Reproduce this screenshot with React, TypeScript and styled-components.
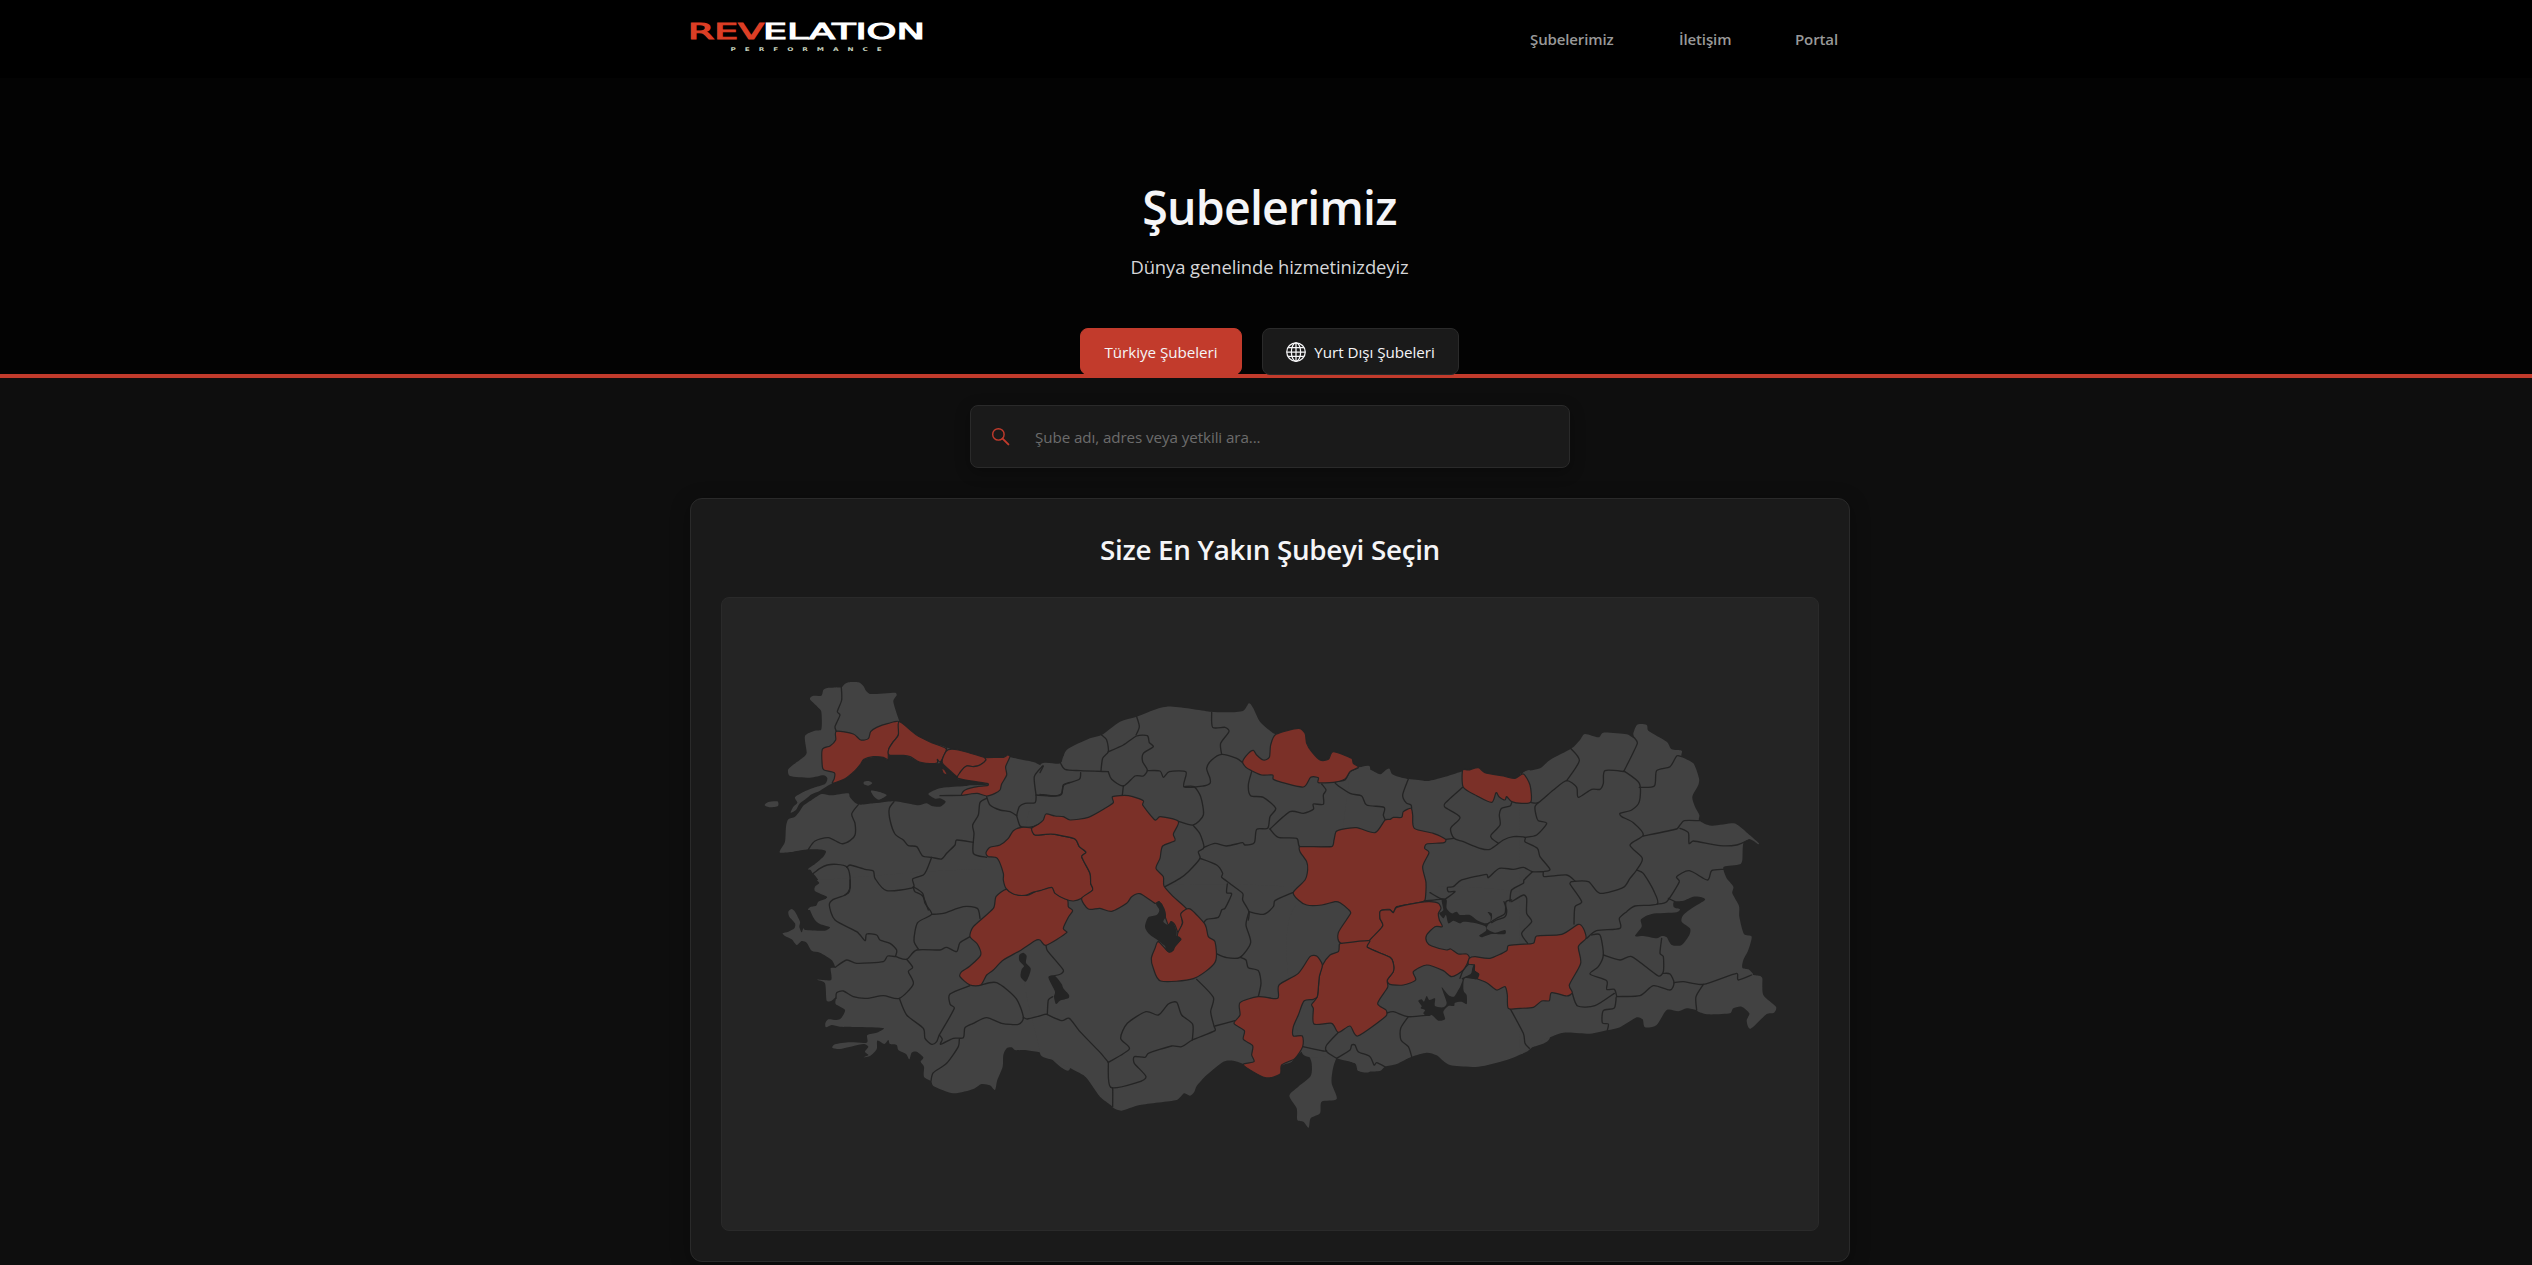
import React from "react";
import styled, { createGlobalStyle } from "styled-components";

const GlobalStyle = createGlobalStyle`
  * { box-sizing: border-box; }
  html, body { margin: 0; padding: 0; background: #0e0e0e; }
  body {
    font-family: "Open Sans", "Noto Sans", sans-serif;
    color: #f5f5f7;
    overflow: hidden;
  }
  h1, h2, p { margin: 0; }
`;

const Page = styled.div`
  width: 100%;
  height: 1265px;
  overflow: hidden;
  background: #0e0e0e;
`;

const Header = styled.header`
  height: 78px;
  background: #000;
`;

const HeaderInner = styled.div`
  width: 1168px;
  height: 100%;
  margin: 0 auto;
  padding-right: 0;
  display: flex;
  justify-content: space-between;
  align-items: center;
`;

const LogoSvg = styled.svg`
  display: block;
  width: 252px;
  height: 78px;
  overflow: visible;
`;

const Nav = styled.nav`
  display: flex;
  gap: 65px;
  padding-right: 13px;
`;

const NavLink = styled.a<{ $w: number }>`
  width: ${(p) => p.$w}px;
  font-size: 15px;
  font-weight: 600;
  line-height: 24px;
  letter-spacing: -0.12px;
  white-space: nowrap;
  color: #999;
`;

const Hero = styled.section`
  height: 300px;
  background: #030303;
  border-bottom: 4px solid #c23b2c;
  display: flex;
  flex-direction: column;
  align-items: center;
  padding: 97px 0 0 7px;
`;

const Title = styled.h1`
  font-size: 46.5px;
  line-height: 64px;
  font-weight: 600;
  letter-spacing: -0.8px;
  color: #f5f5f7;
`;

const Subtitle = styled.p`
  margin-top: 13px;
  font-size: 18.4px;
  line-height: 30px;
  letter-spacing: -0.08px;
  color: #d6d6d8;
`;

const Tabs = styled.div`
  display: flex;
  gap: 20px;
  margin-top: 46px;
`;

const Tab = styled.button<{ $active?: boolean; $w: number }>`
  width: ${(p) => p.$w}px;
  height: 47px;
  flex: none;
  display: flex;
  align-items: center;
  justify-content: center;
  gap: 8px;
  padding: 0;
  border: 1px solid ${(p) => (p.$active ? "#c23b2c" : "#2a2a2a")};
  border-radius: 8px;
  background: ${(p) => (p.$active ? "#c23b2c" : "#1a1a1a")};
  color: #f5f5f7;
  font-family: inherit;
  font-size: 15.2px;
  letter-spacing: -0.03px;
  white-space: nowrap;
`;

const Main = styled.main`
  display: flex;
  flex-direction: column;
  align-items: center;
  padding: 27px 0 0 8px;
`;

const Search = styled.div`
  width: 600px;
  height: 63px;
  display: flex;
  align-items: center;
  gap: 25px;
  padding-left: 21px;
  border: 1px solid #2a2a2a;
  border-radius: 8px;
  background: #1a1a1a;
  box-shadow: 0 4px 15px rgba(0, 0, 0, 0.3);
`;

const Placeholder = styled.span`
  font-size: 15.2px;
  letter-spacing: -0.09px;
  line-height: 24px;
  color: #6c6c6c;
`;

const Card = styled.section`
  width: 1160px;
  height: 764px;
  margin-top: 30px;
  padding: 28px 30px 0;
  border: 1px solid #2a2a2a;
  border-radius: 12px;
  background: #1a1a1a;
  box-shadow: 0 4px 20px rgba(0, 0, 0, 0.3);
`;

const CardTitle = styled.h2`
  height: 44px;
  line-height: 44px;
  font-size: 27.8px;
  font-weight: 600;
  letter-spacing: -0.3px;
  text-align: center;
  color: #f5f5f7;
`;

const MapBox = styled.div`
  margin-top: 26px;
  height: 634px;
  border: 1px solid #2a2a2a;
  border-radius: 8px;
  background: #242424;
  overflow: hidden;
`;

const MapSvg = styled.svg`
  display: block;
  width: 1098px;
  height: 632px;
`;

/* Every sheet is a section of the map, drawn at three units to the pixel. */
interface Sheet {
  x: number;
  y: number;
  land: string[];
  branch: string[];
  water: string[];
  lines: string[];
}

const sheets: Sheet[] = [
  {
    x: 740,
    y: 660,
    land: [
      "210,118 218,108 244,107 250,90 262,84 304,82 312,74 325,67 355,67 370,78 378,92 392,102 466,98 470,106 460,125 478,183 485,190 530,225 575,248 620,264 610,290 600,308 592,310 545,308 520,296 495,287 450,285 442,300 430,292 410,290 385,294 372,298 362,312 345,330 330,345 310,358 278,370 262,378 240,392 215,403 200,415 178,432 168,450 152,458 160,440 172,428 165,412 190,396 225,382 255,372 262,355 250,346 210,353 150,348 144,330 155,318 190,292 200,278 195,228 225,212 244,208 244,155 232,140",
      "620,264 635,268 655,270 735,293 790,292 803,284 812,292 880,306 910,318 960,312 970,290 990,268 990,750 205,750 210,742 235,735 262,712 250,705 225,693 225,680 238,668 228,650 218,640 212,630 204,627 225,612 250,590 258,575 250,570 205,568 160,575 120,578 122,568 135,545 138,500 145,478 165,470 180,452 190,437 215,420 245,402 275,406 325,400 330,412 345,428 362,434 400,430 420,428 462,424 500,430 535,436 560,430 575,438 600,440 617,425 600,415 585,416 565,402 590,388 620,382 680,378 690,376 744,374 735,370 690,362 655,358 650,350 625,330 607,310 612,285",
      "372,365 385,363 397,369 385,377 372,373",
      "393,392 425,398 440,406 418,419 404,412",
      "74,436 85,426 112,424 114,438 90,442",
    ],
    branch: [
      "289,214 340,222 362,240 385,236 392,215 410,202 445,190 478,185 475,225 460,245 446,268 444,298 430,292 400,290 372,298 362,312 345,332 315,356 278,370 283,355 283,338 252,330 247,320 247,268 270,258 287,240",
      "478,185 530,225 575,248 618,266 610,290 600,306 592,298 592,308 570,311 545,308 530,302 510,290 490,286 448,285 446,268 460,245 475,225",
      "625,269 655,270 735,293 738,300 720,315 700,320 680,318 662,335 654,352 628,330 607,308 612,285",
      "735,293 790,292 803,285 810,290 797,320 800,345 785,372 780,390 765,400 740,408 712,400 690,402 665,406 672,392 700,382 744,376 744,371 654,355 662,335 680,318 700,320 720,315 738,300",
      "605,325 615,330 622,345 610,340",
    ],
    water: [],
    lines: [
      "304,82 305,120 292,155 300,165 285,200 289,214",
      "620,264 610,290 605,310 650,350",
      "665,406 600,407",
      "740,410 750,435 780,450 810,455 830,467",
      "740,415 720,428 715,465 698,495 702,520 700,580 740,592",
      "700,547 650,540 645,555 620,580 605,597 575,592 548,588 530,560 505,557 490,540 465,522 450,480 448,445 462,425",
      "355,434 335,462 345,490 345,525 330,542 305,551 265,533 225,543 205,568",
      "575,592 560,630 550,645 518,657 520,682 440,692 405,655 400,633 375,628 330,615 320,622",
      "218,642 240,625 262,615 290,613 320,620 330,650 328,695 315,705",
      "520,682 525,695 548,708 565,750",
      "830,467 840,498 855,502 880,500 915,485",
      "830,467 838,440 855,430 885,428 888,405 883,350 908,318",
      "888,405 940,408 965,400 970,375 990,367",
    ],
  },
  {
    x: 740,
    y: 880,
    land: [
      "232,0 238,10 225,28 262,52 235,65 228,78 210,82 212,95 225,120 240,132 270,142 255,152 195,150 190,145 185,157 178,140 180,125 165,95 155,87 145,95 148,110 165,130 163,145 145,155 128,160 135,168 155,178 170,195 185,183 200,188 215,212 240,218 275,240 285,262 272,265 273,300 232,299 255,310 260,362 275,362 288,352 287,372 315,390 303,415 290,420 265,418 256,430 258,442 275,435 300,440 430,444 410,458 382,465 380,488 330,487 285,493 277,503 300,507 370,492 385,500 375,515 385,525 370,532 390,528 410,508 412,482 433,492 445,480 450,492 470,495 475,510 498,522 508,538 515,518 530,515 550,532 542,545 552,560 552,590 573,603 580,618 640,640 700,627 725,612 750,616 765,630 772,600 788,560 790,525 800,505 815,502 825,510 870,512 915,522 990,565 990,0",
    ],
    branch: [
      "798,28 820,40 860,46 885,36 935,20 950,42 982,58 985,80 998,92 985,112 970,145 980,158 918,196 900,180 885,182 840,212 790,240 760,270 740,285 722,315 690,315 660,290 665,275 690,258 722,225 712,192 690,170 700,140 760,85 768,50",
    ],
    water: [
      "838,225 850,218 860,228 858,248 872,265 868,285 857,305 842,290 845,268 852,258 838,242",
      "925,292 945,288 965,312 970,325 987,345 985,355 960,362 948,372 942,350 945,335",
    ],
    lines: [
      "330,0 330,25 315,45 280,58 268,75 285,120 350,155 375,182 380,162 410,165 420,180 450,190 470,210 467,228",
      "285,262 320,240 350,250 430,245 443,228 467,230 500,238 530,210 600,210 620,202 650,215 660,188 690,170",
      "535,207 522,182 533,128 575,103 555,70 548,40 520,20",
      "575,103 610,100 670,80 712,85 720,115",
      "500,238 518,262 505,275 520,312 478,355 430,347 380,355 340,350 310,333 290,338 288,355",
      "478,355 500,405 550,445 555,475 575,493 590,485 598,465 643,385 630,372 630,342 690,317",
      "598,465 607,478 602,493 640,475 670,473 675,443 700,430 740,413 785,430 835,433 850,412 828,355 770,308 722,315",
      "658,478 655,500 620,550 580,578 573,603",
      "850,412 862,417 915,403",
      "918,196 922,212 970,270 962,282 930,290",
    ],
  },
  {
    x: 1040,
    y: 680,
    land: [
      "0,258 62,250 80,210 150,175 185,165 240,125 290,110 380,80 510,95 565,97 610,92 627,70 640,85 660,125 700,160 708,162 775,145 795,160 800,190 815,215 840,240 865,238 880,215 935,235 940,250 955,262 990,262 990,720 0,720",
    ],
    branch: [
      "-162,518 -150,502 -120,495 -95,475 -80,452 -55,442 -25,445 -15,465 30,462 45,463 105,477 118,500 138,517 125,530 150,580 152,610 158,630 125,655 100,663 75,657 45,640 35,622 0,632 -20,636 -45,646 -80,642 -102,625 -110,600 -110,580 -128,535 -155,530",
      "-25,445 -5,433 10,420 18,402 45,408 70,410 90,420 145,412 195,385 220,368 218,350 265,347 310,362 308,375 345,420 360,410 415,424 400,462 405,482 368,498 360,535 348,565 370,590 372,618 400,650 440,687 425,700 427,730 415,758 405,735 393,725 385,735 372,700 358,665 345,670 300,641 275,650 260,670 215,694 180,685 145,687 125,655 158,630 152,610 150,580 125,530 138,517 118,500 105,477 45,463 30,462 -15,465",
      "608,245 625,220 640,211 650,225 670,240 688,232 692,195 708,163 775,145 795,160 800,190 815,215 840,240 865,238 880,215 935,235 940,250 955,262 930,275 915,297 880,307 835,308 835,293 812,292 790,321 725,307 700,298 698,285 665,285 635,272 618,262",
    ],
    water: [],
    lines: [
      "0,278 10,258",
      "62,250 75,268 120,272 205,275",
      "0,343 45,348 65,342 72,315 118,298 122,278",
      "185,165 200,180 205,215 188,235 183,272",
      "205,215 250,195 290,168 322,167 328,188 340,200 310,220 308,245 322,270 310,288 285,288 250,318 215,298 205,275",
      "290,110 298,140 288,165",
      "250,318 247,345",
      "322,272 360,273 370,292 388,275 438,276 432,320 490,318 510,310 510,295 500,265 515,240 545,223 590,235 608,248",
      "515,97 518,142 555,142 567,155 542,190 545,223",
      "432,320 462,320 482,350 490,405 460,435 415,424",
      "460,437 480,462 492,502 475,515 480,535 445,575 420,595 375,620",
      "492,502 525,490 560,498 608,488 615,495 643,488 650,448 683,445 690,410 707,385 670,352 632,347 625,315 635,275",
      "690,447 715,472 770,475 780,500 875,500",
      "690,447 750,395 790,400 820,388 820,372 850,373 850,345 858,330 845,312",
      "480,535 530,555 548,580 545,592 608,640 608,660 627,695 625,720",
      "562,612 560,638 575,642 555,685 545,690 535,712 500,718 490,730",
      "627,695 670,703 700,680 705,662 760,637",
    ],
  },
  {
    x: 1040,
    y: 900,
    land: [
      "0,460 45,482 130,525 155,555 180,590 212,615 222,625 245,632 300,615 410,600 432,580 450,587 463,575 470,558 500,525 550,485 580,482 610,492 675,532 720,522 725,497 755,485 785,455 805,465 815,490 812,528 775,560 748,587 770,625 772,660 790,665 806,683 812,655 840,640 845,605 890,597 875,550 878,510 888,478 900,473 945,490 955,512 990,512 990,0 0,0",
    ],
    branch: [
      "440,27 455,30 495,73 505,110 525,125 525,187 460,236 362,243 340,205 334,175 345,145 355,125 385,155 400,150 405,135 423,118 412,108 415,95 428,68 422,42",
    ],
    water: [
      "355,5 365,10 375,30 378,48 370,65 385,75 393,65 402,72 410,95 410,108 423,118 403,145 390,158 378,150 375,138 355,122 340,112 325,100 315,80 325,52 350,45 358,30 348,12",
    ],
    lines: [
      "15,343 20,343 65,362 88,355 120,395 178,455 205,487",
      "22,343 25,300 38,290",
      "205,487 268,447 242,415 262,370 318,335 355,345 385,312 410,307 425,345 458,373 457,420",
      "205,487 212,562 290,548 318,530 283,490 283,470 315,472 325,460 395,438 425,440 457,420 525,392 522,378 512,335 520,292 470,238",
      "212,562 218,565 218,620",
      "525,378 585,362",
      "527,160 560,173 600,172 632,128 618,75 627,35",
      "600,172 618,180 625,203 655,212 663,250 655,290",
    ],
  },
  {
    x: 1330,
    y: 700,
    land: [
      "85,203 105,203 125,211 150,223 165,212 178,206 186,222 205,230 235,237 265,240 295,243 340,232 393,215 415,210 445,203 465,218 520,228 555,235 575,222 583,215 600,212 600,690 60,690 60,215",
    ],
    branch: [
      "-90,440 5,440 12,420 18,395 35,388 80,383 135,398 165,360 180,358 190,352 215,352 220,335 243,325 248,345 253,385 310,400 347,418 342,428 290,432 284,445 297,458 278,500 288,548 285,600 270,607 200,620 190,637 178,628 152,632 150,655 158,678 118,722 33,730 25,698 62,640 55,628 30,608 15,605 -25,615 -70,615 -95,600 -110,577 -75,540 -67,510 -70,485 -90,455",
      "398,210 415,210 445,203 465,218 520,228 555,235 580,222 600,255 603,305 575,310 545,305 530,290 525,300 507,290 498,278 485,307 440,287 400,262",
    ],
    water: [],
    lines: [
      "345,598 330,595 300,578",
      "345,598 375,575 355,575 353,562 370,560 395,540 470,523 475,533 508,505 550,508 580,502 607,515 640,515",
      "285,603 330,598 345,598",
      "235,237 218,285 228,308 243,315 245,325",
      "85,203 60,215 45,240 15,248 60,280 95,288 110,315 162,322 160,345 165,358",
      "398,262 345,310 345,322 390,352 362,385 372,415 400,425 450,445 480,448 520,420 550,410 585,412 585,425 622,445 630,470 660,508 640,515",
      "347,418 372,415",
      "545,308 540,318 515,325 508,345 510,375 483,405 485,415 505,430",
      "605,308 625,308 670,270 710,242 740,262 745,292 785,268 810,268 820,250 825,212 885,215",
      "625,308 615,320 618,345 625,362 650,370 620,405 585,412",
      "722,145 748,182 710,242",
      "640,515 642,530 710,525 735,543",
      "467,675 500,655 525,640 528,605 545,600",
      "540,605 545,570 580,550 582,540 607,515",
      "545,605 580,585 590,595 590,640 605,665 575,700 593,730",
    ],
  },
  {
    x: 1230,
    y: 900,
    land: [
      "215,455 300,470 330,478 380,492 385,513 450,513 465,500 500,492 545,470 590,458 620,466 660,495 745,500 830,480 890,455 905,443 960,412 960,0 215,0",
    ],
    branch: [
      "452,32 480,30 490,38 500,22 570,7 600,5 625,10 633,25 625,40 628,60 637,80 615,80 590,105 590,125 605,138 650,150 662,147 685,162 710,162 718,175 700,210 665,230 640,212 590,195 550,215 557,240 520,255 480,253 472,240 490,215 490,190 480,172 412,142 418,122 458,78 450,55",
      "333,130 418,122 412,142 480,172 490,190 490,215 472,240 473,262 443,310 468,330 468,348 383,408 360,378 325,397 305,370 252,372 250,325 245,313 262,290 268,230 278,195 300,165 325,155 328,133",
      "30,308 85,290 143,295 147,255 205,220 240,170 260,168 277,195 268,230 262,290 250,298 222,303 205,345 190,380 190,408 217,408 218,440 195,475 155,495 150,523 105,533 40,495 72,485 65,465 68,437 40,418 43,392 12,370 30,345",
    ],
    water: [
      "635,0 650,0 650,25 665,40 680,35 690,45 720,45 740,60 765,70 780,65 782,50 773,36 785,40 785,58 770,85 795,98 825,90 825,102 785,102 755,112 748,106 768,92 765,78 730,68 700,65 690,70 670,62 655,70 648,45 640,55 628,40 640,30",
      "565,303 575,298 582,305 590,288 598,300 615,295 615,318 640,322 650,308 635,262 655,285 672,290 685,270 690,262 698,240 695,235 722,222 727,205 733,192 735,212 748,222 740,238 705,235 700,260 702,275 710,285 710,312 695,305 675,308 672,318 655,318 640,335 645,358 625,362 605,345 590,348 580,340 585,330 572,325 575,318",
    ],
    lines: [
      "218,440 280,453 290,453",
      "325,397 290,435 290,455 320,475",
      "320,475 360,450 365,435 375,435 385,455 420,470 432,495 440,488 465,500",
      "468,340 490,335 535,350 600,345",
      "535,350 512,385 513,420 535,440 545,470",
      "690,235 700,210 718,190",
      "785,68 800,60 825,50 830,30 822,5",
    ],
  },
  {
    x: 1520,
    y: 700,
    land: [
      "0,1060 28,1045 60,1025 130,998 210,1001 262,991 300,982 350,952 368,958 375,982 410,975 440,930 475,934 500,925 528,930 535,935 565,943 630,940 640,925 665,920 688,940 680,962 692,986 740,942 762,938 768,920 730,885 727,835 720,828 700,825 698,820 685,808 667,803 670,780 685,750 695,710 672,702 658,650 657,618 637,580 640,560 620,535 610,508 612,500 660,493 667,480 670,430 690,418 715,433 717,430 690,406 660,380 640,370 575,377 538,362 538,345 525,320 517,290 535,255 537,235 520,190 485,170 485,152 455,148 440,125 385,92 380,75 352,74 340,100 342,115 320,103 250,98 235,112 195,102 180,120 155,145 90,180 60,205 15,215 5,222 0,222",
    ],
    branch: [
      "-152,775 -135,770 -90,775 -40,752 -35,737 0,733 40,730 50,708 125,703 175,673 190,685 198,715 175,740 182,790 148,855 157,878 140,888 95,878 88,902 65,903 40,922 0,925 -35,925 -38,885 -45,860 -70,870 -100,848 -130,835 -125,822 -137,812 -137,795 -155,792",
    ],
    water: [
      "345,708 365,680 363,658 395,642 470,637 480,628 462,622 462,605 490,602 520,590 545,592 555,600 520,622 490,645 485,665 510,685 508,705 485,735 455,735 440,712 425,708 410,715 370,708",
    ],
    lines: [
      "312,213 352,130 342,112",
      "312,213 358,250 358,305 335,330 300,340 305,350 340,368 370,405 330,435 367,475 350,510 330,535 310,562 240,580 205,545 155,545 150,552 185,605 165,620 162,672",
      "358,262 403,258 410,212 450,200 470,168 485,170",
      "370,408 470,387 480,375 493,362 538,362",
      "480,385 505,398 507,430 520,423 600,437 650,435 688,420",
      "350,510 370,520 400,570 412,612 345,618 320,635 298,655 300,685 230,692 200,715",
      "412,612 440,605 478,545 470,530 508,512 562,540 575,512 610,508",
      "445,595 465,605",
      "215,705 240,705 250,765 235,800 210,822 260,842 260,868 283,868 290,888",
      "283,880 225,917 173,918 157,880",
      "250,765 300,780 335,770 415,828 430,815 430,770 420,760 425,715",
      "430,820 450,822 462,848 450,870 400,857 360,887 290,890 288,900 282,925 250,932 247,968 265,972 262,991",
      "462,848 490,845 550,853 650,820 655,840 695,825",
      "550,853 528,890 530,930",
      "-30,925 10,1000 15,1030 28,1045",
    ],
  },
];

/* Rounds a list of points into a soft curve. */
const curve = (src: string, closed: boolean): string => {
  const p = src.split(" ").map((s) => s.split(",").map(Number));
  const n = p.length;
  const at = (i: number) =>
    closed ? p[(i + n) % n] : p[Math.max(0, Math.min(n - 1, i))];
  const k = 0.13;
  let d = `M${p[0][0]} ${p[0][1]}`;
  for (let i = 0; i < (closed ? n : n - 1); i++) {
    const [a, b, c, e] = [at(i - 1), at(i), at(i + 1), at(i + 2)];
    const len = Math.hypot(c[0] - b[0], c[1] - b[1]);
    const h = (u: number[], v: number[]) => {
      const l = Math.hypot(v[0] - u[0], v[1] - u[1]) || 1;
      const s = Math.min(l * k, len * 0.33) / l;
      return [(v[0] - u[0]) * s, (v[1] - u[1]) * s];
    };
    const h1 = h(a, c);
    const h2 = h(b, e);
    d += `C${(b[0] + h1[0]).toFixed(1)} ${(b[1] + h1[1]).toFixed(1)} ${(c[0] - h2[0]).toFixed(1)} ${(c[1] - h2[1]).toFixed(1)} ${c[0]} ${c[1]}`;
  }
  return closed ? d + "Z" : d;
};

type Layer = "land" | "branch" | "water" | "lines";

const MapLayer = ({ name, ...rest }: { name: Layer } & Omit<React.SVGProps<SVGGElement>, "name">) => (
  <g {...rest}>
    {sheets.map((s, i) => (
      <g key={i} transform={`translate(${s.x} ${s.y}) scale(0.33333)`}>
        {s[name].map((d, j) => (
          <path key={j} d={curve(d, name !== "lines")} />
        ))}
      </g>
    ))}
  </g>
);

const TurkeyMap = () => (
  <MapSvg viewBox="722 598 1098 632">
    <MapLayer name="land" fill="#424242" />
    <MapLayer name="lines" fill="none" stroke="#242424" strokeWidth={4} strokeLinecap="round" strokeLinejoin="round" />
    <MapLayer name="branch" fill="#7b3028" stroke="#242424" strokeWidth={3.6} strokeLinejoin="round" />
    <MapLayer name="water" fill="#242424" />
  </MapSvg>
);

const Logo = () => (
  <LogoSvg viewBox="-8 0 252 78">
    <g fontFamily="DejaVu Sans, sans-serif" fontSize="22" strokeWidth="1.1">
      <text x="-2" y="38.6" fill="#dc3e25" stroke="#dc3e25" textLength="76" lengthAdjust="spacingAndGlyphs">REV</text>
      <text x="73" y="38.6" fill="#fff" stroke="#fff" textLength="162" lengthAdjust="spacingAndGlyphs">ELATION</text>
    </g>
    <g transform="scale(1.4 1)">
      <text x="29" y="51" fontSize="5.2" fontFamily="DejaVu Sans, sans-serif" fontWeight={700} fill="#c5d0bd" textLength="108" lengthAdjust="spacing">PERFORMANCE</text>
    </g>
  </LogoSvg>
);

const Globe = () => (
  <svg width="20" height="20" viewBox="0 0 16 16" fill="none" stroke="#f5f5f7" strokeWidth="1">
    <circle cx="8" cy="8" r="7.4" />
    <ellipse cx="8" cy="8" rx="3.7" ry="7.4" />
    <path d="M8 .6v14.8M.6 8h14.8M1.7 4.5h12.6M1.7 11.5h12.6" />
  </svg>
);

const SearchIcon = () => (
  <svg width="18" height="18" viewBox="0 0 18 18" fill="none" stroke="#c23b2c" strokeLinecap="round">
    <circle cx="6.4" cy="6.4" r="5.7" strokeWidth="1.4" />
    <path d="M10.6 10.6l5.8 5.8" strokeWidth="1.9" />
  </svg>
);

export default function App() {
  return (
    <Page>
      <GlobalStyle />
      <Header>
        <HeaderInner>
          <Logo />
          <Nav>
            <NavLink $w={84}>Şubelerimiz</NavLink>
            <NavLink $w={51}>İletişim</NavLink>
            <NavLink $w={42}>Portal</NavLink>
          </Nav>
        </HeaderInner>
      </Header>
      <Hero>
        <Title>Şubelerimiz</Title>
        <Subtitle>Dünya genelinde hizmetinizdeyiz</Subtitle>
        <Tabs>
          <Tab $active $w={162}>Türkiye Şubeleri</Tab>
          <Tab $w={197}>
            <Globe />
            Yurt Dışı Şubeleri
          </Tab>
        </Tabs>
      </Hero>
      <Main>
        <Search>
          <SearchIcon />
          <Placeholder>Şube adı, adres veya yetkili ara...</Placeholder>
        </Search>
        <Card>
          <CardTitle>Size En Yakın Şubeyi Seçin</CardTitle>
          <MapBox>
            <TurkeyMap />
          </MapBox>
        </Card>
      </Main>
    </Page>
  );
}
